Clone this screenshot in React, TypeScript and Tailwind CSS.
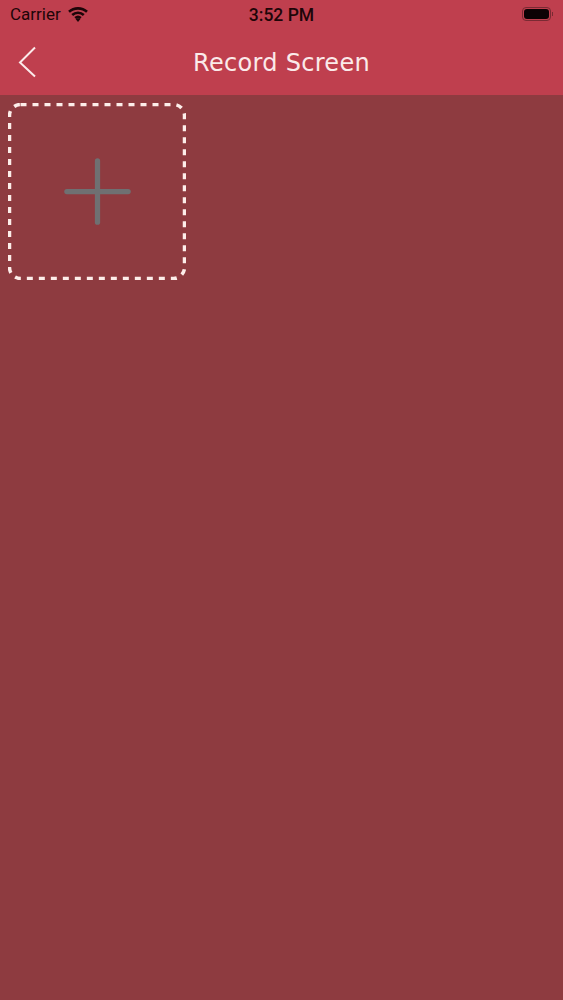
import { Plus } from "lucide-react";

function WifiIcon() {
  return (
    <svg width="20" height="15" viewBox="0 0 20 15" fill="none" stroke="currentColor" strokeWidth="2.600" className="text-[#1d0508] -mt-[2px]">
      <path d="M1 4.800C6 .2 14 .2 19 4.800" />
      <path d="M4.200 8C7.500 5 12.500 5 15.800 8" />
      <path d="M7.200 11C8.800 9.600 11.200 9.600 12.800 11" />
      <path d="M10 15l-2.400-2.900c1.400-1 3.400-1 4.800 0z" fill="currentColor" stroke="none" />
    </svg>
  );
}

function BatteryIcon() {
  return (
    <div className="flex items-center gap-[1px] -mt-[2px]">
      <div className="w-[29px] h-[14px] rounded-[4px] border border-[#7a2a33] p-[1px]">
        <div className="w-full h-full rounded-[3px] bg-[#0c0204]" />
      </div>
      <div className="w-[1px] h-[4px] bg-[#7a2a33]" />
    </div>
  );
}

export default function App() {
  return (
    <div className="w-[563px] h-[1000px] bg-[#8e3b40] flex flex-col overflow-hidden font-['Liberation_Sans',sans-serif]">
      {/* Nav bar */}
      <div className="h-[95px] bg-[#bf3f4e] shrink-0 flex flex-col">
        <div className="h-[30px] px-[10px] grid grid-cols-3 items-center text-[#1d0508]">
          <div className="flex items-center gap-[7px]">
            <span className="text-[17px] font-['Roboto',sans-serif]">Carrier</span>
            <WifiIcon />
          </div>
          <span className="text-[17.500px] font-medium text-center font-['Roboto',sans-serif]">3:52 PM</span>
          <div className="flex justify-end">
            <BatteryIcon />
          </div>
        </div>
        <div className="relative flex-1 flex items-center justify-center">
          <svg width="18" height="32" viewBox="0 0 18 32" fill="none" className="absolute left-[18px] top-[16px]">
            <path d="M17 1.500 2 16.500 17 30.500" stroke="#fbeaea" strokeWidth="2" />
          </svg>
          <span className="text-[24px] text-[#fbeaea] font-['DejaVu_Sans',sans-serif] tracking-[0.3px]">Record Screen</span>
        </div>
      </div>

      {/* Content */}
      <div className="flex-1 p-2">
        <button className="relative w-[178px] h-[177px] flex items-center justify-center">
          <svg width="178" height="177" viewBox="0 0 178 177" fill="none" className="absolute inset-0">
            <rect x="1.500" y="1.500" width="175" height="174" rx="11" stroke="#fdeeea" strokeWidth="3.500" strokeDasharray="6 6" />
          </svg>
          <Plus size={105} strokeWidth={1.200} className="text-[#6f7072]" />
        </button>
      </div>
    </div>
  );
}
